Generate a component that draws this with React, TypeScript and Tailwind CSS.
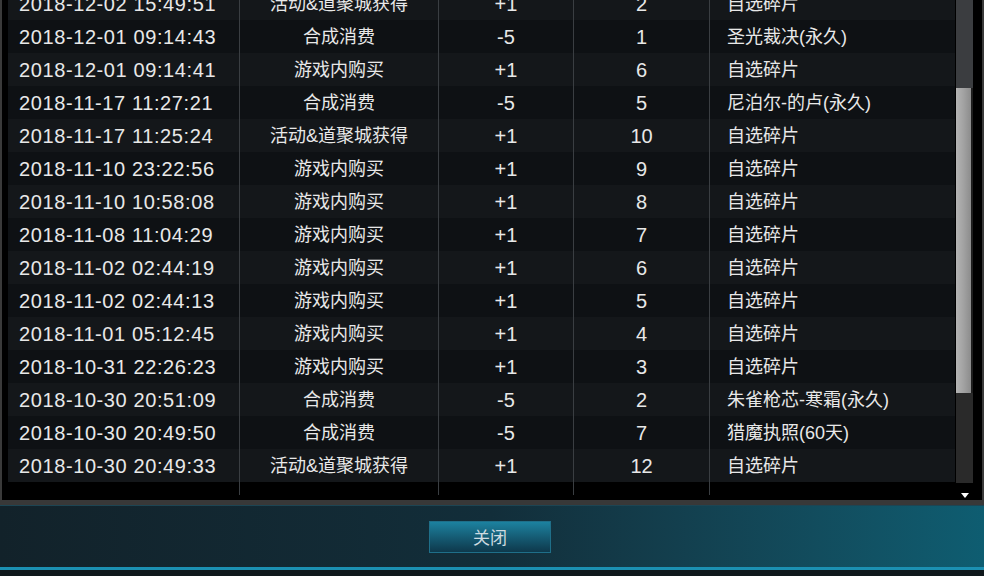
import React from 'react';

type Record = {
  time: string;
  source: string;
  change: string;
  count: string;
  item: string;
};

const records: Record[] = [
  { time: '2018-12-02 15:49:51', source: '活动&道聚城获得', change: '+1', count: '2', item: '自选碎片' },
  { time: '2018-12-01 09:14:43', source: '合成消费', change: '-5', count: '1', item: '圣光裁决(永久)' },
  { time: '2018-12-01 09:14:41', source: '游戏内购买', change: '+1', count: '6', item: '自选碎片' },
  { time: '2018-11-17 11:27:21', source: '合成消费', change: '-5', count: '5', item: '尼泊尔-的卢(永久)' },
  { time: '2018-11-17 11:25:24', source: '活动&道聚城获得', change: '+1', count: '10', item: '自选碎片' },
  { time: '2018-11-10 23:22:56', source: '游戏内购买', change: '+1', count: '9', item: '自选碎片' },
  { time: '2018-11-10 10:58:08', source: '游戏内购买', change: '+1', count: '8', item: '自选碎片' },
  { time: '2018-11-08 11:04:29', source: '游戏内购买', change: '+1', count: '7', item: '自选碎片' },
  { time: '2018-11-02 02:44:19', source: '游戏内购买', change: '+1', count: '6', item: '自选碎片' },
  { time: '2018-11-02 02:44:13', source: '游戏内购买', change: '+1', count: '5', item: '自选碎片' },
  { time: '2018-11-01 05:12:45', source: '游戏内购买', change: '+1', count: '4', item: '自选碎片' },
  { time: '2018-10-31 22:26:23', source: '游戏内购买', change: '+1', count: '3', item: '自选碎片' },
  { time: '2018-10-30 20:51:09', source: '合成消费', change: '-5', count: '2', item: '朱雀枪芯-寒霜(永久)' },
  { time: '2018-10-30 20:49:50', source: '合成消费', change: '-5', count: '7', item: '猎魔执照(60天)' },
  { time: '2018-10-30 20:49:33', source: '活动&道聚城获得', change: '+1', count: '12', item: '自选碎片' },
];

const cols = 'grid grid-cols-[231px_199px_135px_136px_246px]';
const divider = 'border-l border-[#3a3e42]';

const App: React.FC = () => {
  return (
    <div className="w-[984px] h-[576px] bg-black flex flex-col overflow-hidden font-['Liberation_Sans','Noto_Sans_CJK_SC',sans-serif] text-[#e8e8e8]">
      {/* list area */}
      <div className="h-[500px] flex border-l-2 border-r-2 border-[#3a3a3a] pl-[6px] overflow-hidden">
        <div className="w-[947px] flex flex-col">
          <div className="-mt-[13px]">
            {records.map((r, i) => (
              <div
                key={i}
                className={`${cols} h-[33px] items-stretch ${i % 2 === 0 ? 'bg-[#14171a]' : 'bg-[#0e1114]'}`}
              >
                <div className="flex items-center pl-[11px] text-[20px] tracking-[0.6px]">{r.time}</div>
                <div className={`${divider} flex items-center justify-center pt-[2px] text-[18px]`}>{r.source}</div>
                <div className={`${divider} flex items-center justify-center text-[20px]`}>{r.change}</div>
                <div className={`${divider} flex items-center justify-center text-[20px]`}>{r.count}</div>
                <div className={`${divider} flex items-center pl-[17px] pt-[2px] text-[18px]`}>{r.item}</div>
              </div>
            ))}
          </div>
          <div className={`${cols} h-[13px]`}>
            <div />
            <div className={divider} />
            <div className={divider} />
            <div className={divider} />
            <div className={divider} />
          </div>
        </div>

        {/* scrollbar */}
        <div className="ml-[1px] w-[17px] flex flex-col items-center">
          <div className="w-full h-[483px] flex flex-col">
            <div className="h-[88px] bg-[#3b3d40]" />
            <div className="h-[305px] flex">
              <div className="w-[15px] bg-linear-to-r from-[#b4b4b4] via-[#a2a2a2] to-[#8c8c8c]" />
              <div className="w-[2px] bg-[#1e1e1e]" />
            </div>
            <div className="flex-1 bg-[#2a2a2a]" />
          </div>
          <div className="mt-[10px] w-0 h-0 border-l-[4px] border-r-[4px] border-t-[5px] border-x-transparent border-t-white" />
        </div>
      </div>

      {/* footer */}
      <div className="h-[5px] bg-[#383838]" />
      <div className="h-[1px] bg-[#1d4553]" />
      <div className="h-[61px] flex items-center justify-center pr-[4px] bg-linear-to-r from-[#12222a] via-[#122e3a] to-[#0e5d71]">
        <button className="w-[122px] h-[32px] border border-[#1f6f89] bg-linear-to-b from-[#1c82a0] to-[#0e394c] text-[17px] text-[#cfdbe0] font-['Noto_Sans_CJK_SC',sans-serif]">
          关闭
        </button>
      </div>
      <div className="h-[3px] bg-[#1b90b2]" />
      <div className="flex-1 bg-[#0f181c]" />
    </div>
  );
};

export default App;
